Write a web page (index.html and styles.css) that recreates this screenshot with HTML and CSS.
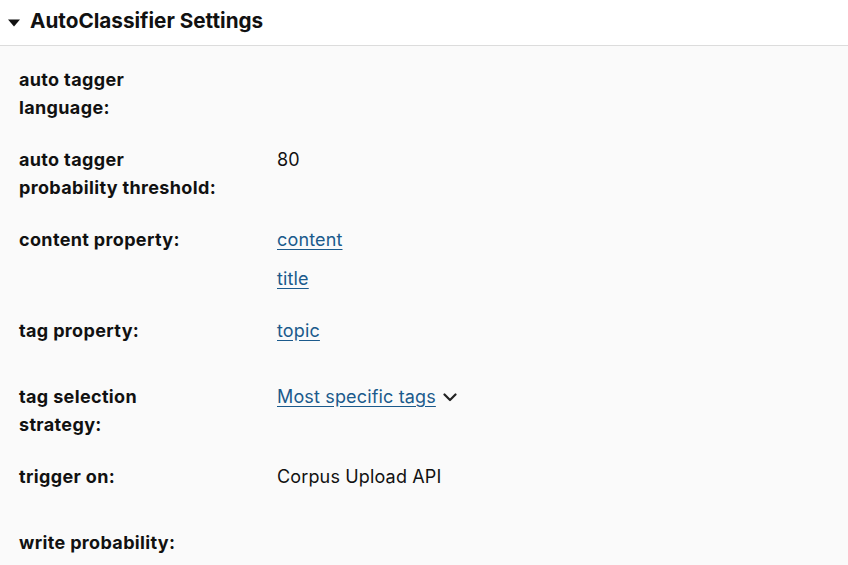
FILE: index.html
```html
<!DOCTYPE html>
<html>
<head>
<meta charset="utf-8">
<link rel="stylesheet" href="styles.css">
</head>
<body>
<section class="panel">
  <header class="panel-head">
    <svg class="caret" width="14" height="8" viewBox="0 0 14 8"><path d="M1 0.5 L13 0.5 L7 7.5 Z" fill="#111"/></svg>
    <h2 class="panel-title">AutoClassifier Settings</h2>
  </header>
  <div class="panel-body">
    <div class="row">
      <div class="label">auto tagger<br>language:</div>
      <div class="value"></div>
    </div>
    <div class="row">
      <div class="label">auto tagger<br>probability threshold:</div>
      <div class="value"><span>80</span></div>
    </div>
    <div class="row">
      <div class="label">content property:</div>
      <div class="value list"><a href="#">content</a><a href="#">title</a></div>
    </div>
    <div class="row tall">
      <div class="label">tag property:</div>
      <div class="value"><a href="#">topic</a></div>
    </div>
    <div class="row">
      <div class="label">tag selection<br>strategy:</div>
      <div class="value"><span class="select"><a href="#">Most specific tags</a><svg class="chev" width="14" height="9" viewBox="0 0 14 9"><path d="M1.5 1.5 L7 7 L12.5 1.5" fill="none" stroke="#222" stroke-width="2.2" stroke-linecap="round" stroke-linejoin="round"/></svg></span></div>
    </div>
    <div class="row tall">
      <div class="label">trigger on:</div>
      <div class="value"><span>Corpus Upload API</span></div>
    </div>
    <div class="row">
      <div class="label">write probability:</div>
      <div class="value"></div>
    </div>
  </div>
</section>
</body>
</html>
```
FILE: styles.css
```css
html, body {
  margin: 0;
  padding: 0;
  background: #fafafa;
}
body {
  font-family: Inter, "Liberation Sans", sans-serif;
  color: #111;
  font-size: 18px;
  letter-spacing: 0.15px;
}
.panel-head {
  height: 45px;
  background: #fff;
  border-bottom: 1px solid #dcdcdc;
  display: flex;
  align-items: center;
  padding-left: 7px;
  gap: 9px;
}
.caret {
  display: block;
}
.panel-title {
  margin: 0;
  font-size: 20.7px;
  font-weight: 700;
  line-height: 28px;
  letter-spacing: 0;
  padding-bottom: 4px;
}
.panel-body {
  padding: 20px 19px 0;
}
.row {
  display: grid;
  grid-template-columns: 258px 1fr;
  line-height: 28px;
  margin-bottom: 24px;
}
.row.tall {
  margin-bottom: 38px;
}
.label {
  font-weight: 700;
  letter-spacing: 0.35px;
}
.value.list {
  display: flex;
  flex-direction: column;
  align-items: flex-start;
  gap: 11px;
}
a {
  color: #1b5a8c;
  text-decoration: underline;
  text-underline-offset: 3px;
}
.select {
  display: inline-flex;
  align-items: center;
  gap: 7px;
}
.chev {
  display: block;
}
```
